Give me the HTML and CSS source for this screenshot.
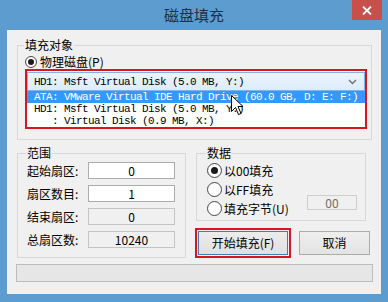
FILE: index.html
```html
<!DOCTYPE html>
<html lang="zh-CN">
<head>
    <meta charset="UTF-8">
    <meta name="viewport" content="width=device-width, initial-scale=1.0">
    <title>磁盘填充</title>
    <link rel="stylesheet" href="styles.css">
</head>
<body>
    <div class="window">
        <div class="titlebar">
            <div class="title">磁盘填充</div>
            <div class="close">
                <svg width="10" height="9" viewBox="0 0 10 9"><path d="M1 0.5 L9 8.5 M9 0.5 L1 8.5" stroke="#fff" stroke-width="1.8"/></svg>
            </div>
        </div>

        <div class="client">
            <fieldset class="group target">
                <legend>填充对象</legend>
                <div class="radio"><span class="dot small checked"></span>物理磁盘(P)</div>
                <div class="highlight">
                    <div class="combo">
                        <span>HD1: Msft Virtual Disk (5.0 MB, Y:)</span>
                        <svg width="9" height="6" viewBox="0 0 9 6"><path d="M1 1 L4.5 4.5 L8 1" stroke="#6d6d6d" stroke-width="1.4" fill="none"/></svg>
                    </div>
                    <div class="list">
                        <div class="item selected">ATA: VMware Virtual IDE Hard Drive (60.0 GB, D: E: F:)</div>
                        <div class="item">HD1: Msft Virtual Disk (5.0 MB, Y:)</div>
                        <div class="item">   : Virtual Disk (0.9 MB, X:)</div>
                    </div>
                </div>
            </fieldset>

            <div class="row">
                <fieldset class="group range">
                    <legend>范围</legend>
                    <div class="fields">
                        <div class="label">起始扇区:</div><div class="field">0</div>
                        <div class="label">扇区数目:</div><div class="field">1</div>
                        <div class="label">结束扇区:</div><div class="field readonly">0</div>
                        <div class="label">总扇区数:</div><div class="field readonly">10240</div>
                    </div>
                </fieldset>

                <div class="side">
                    <fieldset class="group data">
                        <legend>数据</legend>
                        <div class="radio opt"><span class="dot checked"></span>以00填充</div>
                        <div class="radio opt"><span class="dot"></span>以FF填充</div>
                        <div class="radio opt"><span class="dot"></span>填充字节(U)<div class="byte">00</div></div>
                    </fieldset>
                    <div class="buttons">
                        <div class="btn default">开始填充(F)</div>
                        <div class="btn cancel">取消</div>
                    </div>
                </div>
            </div>

            <div class="progress"></div>
        </div>

        <svg class="cursor" width="13" height="21" viewBox="0 0 13 21">
            <path d="M0.5 0.5 L0.5 16.5 L4.5 12.5 L7.5 19.5 L10 18.5 L7 11.5 L12 11.5 Z" fill="#fff" stroke="#000" stroke-width="1"/>
        </svg>
    </div>
</body>
</html>
```

FILE: styles.css
```css
    body {
        margin: 0;
        font-family: "Noto Sans CJK SC", "Liberation Sans", sans-serif;
        font-size: 12px;
        color: #000;
    }

    .window {
        position: relative;
        width: 388px;
        height: 302px;
        background-color: #5c9ccf;
        display: flex;
        flex-direction: column;
    }

    .titlebar {
        height: 30px;
        display: grid;
        grid-template-columns: 1fr auto 1fr;
    }

    .title {
        grid-column: 2;
        font-size: 15px;
        line-height: 30px;
        color: #22303e;
    }

    .close {
        grid-column: 3;
        justify-self: end;
        margin-right: 6px;
        width: 30px;
        height: 20px;
        background-color: #c8504b;
        display: flex;
        justify-content: center;
        align-items: center;
    }

    .client {
        margin: 0 7px;
        height: 264px;
        background-color: #f0f0f0;
        display: flex;
        flex-direction: column;
        box-sizing: border-box;
    }

    /* group boxes */
    .group {
        margin: 0;
        padding: 0;
        min-width: 0;
        border: 1px solid #d8d8d8;
        box-sizing: border-box;
    }

    .group legend {
        padding: 0 1px;
        margin-left: -1px;
        line-height: 14px;
        font-size: 12px;
    }

    .target {
        margin: 8px 0 0 10px;
        width: 355px;
        padding: 3px 0 10px 7px;
    }

    .radio {
        display: flex;
        align-items: center;
        height: 14px;
        line-height: 14px;
    }

    .dot {
        width: 13px;
        height: 13px;
        box-sizing: border-box;
        border: 1px solid #4a4a4a;
        border-radius: 50%;
        background: radial-gradient(circle, #fff 55%, #e8e8e8);
        margin-right: 3px;
        display: flex;
        justify-content: center;
        align-items: center;
        flex: none;
    }

    .dot.small {
        width: 12px;
        height: 12px;
    }

    .dot.checked::after {
        content: "";
        width: 7px;
        height: 7px;
        border-radius: 50%;
        background-color: #1a1a1a;
    }

    .dot.small.checked::after {
        width: 6px;
        height: 6px;
    }

    .highlight {
        width: 342px;
        border: 2px solid #d9161d;
        box-sizing: border-box;
        background-color: #fff;
    }

    .combo {
        margin-top: 1px;
        height: 19px;
        box-sizing: border-box;
        border: 1px solid #7eb4ea;
        background: linear-gradient(#ecf4fc, #dcecfc);
        display: flex;
        align-items: center;
        justify-content: space-between;
        padding: 0 7px 0 6px;
    }

    .combo span, .item {
        font-family: "Liberation Mono", "DejaVu Sans Mono", monospace;
        font-size: 11px;
        letter-spacing: -0.6px;
        white-space: pre;
    }

    .item {
        height: 12px;
        line-height: 12px;
        padding-left: 7px;
    }

    .item.selected {
        background-color: #3399ff;
        color: #fff;
    }

    /* lower part */
    .row {
        display: flex;
        margin: 6px 0 0 10px;
    }

    .range {
        width: 169px;
        padding: 2px 10px 9px 9px;
    }

    .fields {
        display: grid;
        grid-template-columns: 61px 87px;
        grid-auto-rows: 17px;
        row-gap: 6px;
        align-items: center;
    }

    .label {
        line-height: 17px;
    }

    .field {
        height: 17px;
        line-height: 15px;
        box-sizing: border-box;
        border: 1px solid #acacac;
        background-color: #fff;
        text-align: center;
    }

    .field.readonly {
        background-color: #f0f0f0;
        border-color: #c4c4c4;
    }

    .side {
        margin-left: 10px;
        width: 174px;
    }

    .data {
        width: 170px;
        padding: 1px 0 2px 10px;
    }

    .opt {
        height: 19px;
        line-height: 19px;
    }

    .opt .dot {
        width: 15px;
        height: 15px;
        margin-right: 2px;
    }

    .byte {
        margin: 0 8px 12px auto;
        width: 50px;
        height: 15px;
        line-height: 13px;
        box-sizing: border-box;
        border: 1px solid #cfcfcf;
        background-color: #f0f0f0;
        color: #6d6d6d;
        text-align: center;
    }

    .buttons {
        display: flex;
        margin-top: 10px;
        gap: 11px;
        padding-left: 2px;
    }

    .btn {
        height: 24px;
        line-height: 22px;
        box-sizing: border-box;
        text-align: center;
    }

    .btn.default {
        width: 90px;
        border: 1px solid #3c7fb1;
        background: linear-gradient(#ececec, #e0e0e0);
        outline: 2px solid #d9161d;
        outline-offset: 1px;
    }

    .btn.cancel {
        width: 71px;
        border: 1px solid #acacac;
        background: linear-gradient(#efefef, #e3e3e3);
    }

    .progress {
        margin: 6px 0 0 9px;
        width: 357px;
        height: 18px;
        box-sizing: border-box;
        border: 1px solid #bcbcbc;
        background-color: #e6e6e6;
    }

    .cursor {
        position: absolute;
        left: 231px;
        top: 95px;
    }
```
